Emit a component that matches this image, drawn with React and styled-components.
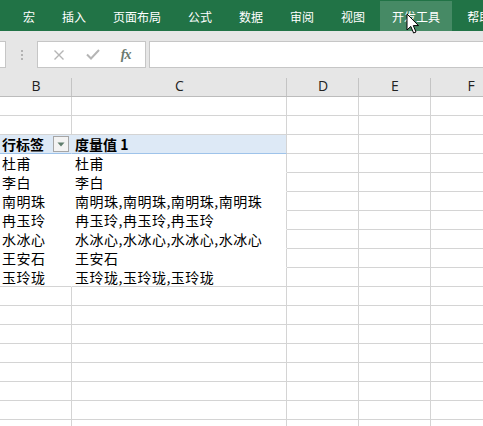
import React from "react";
import styled, { createGlobalStyle } from "styled-components";

const Global = createGlobalStyle`
  html, body { margin: 0; padding: 0; background: #fff; overflow: hidden; }
  body { width: 483px; height: 426px; font-family: "Noto Sans CJK SC", "Liberation Sans", sans-serif; }
`;

const Page = styled.div`
  position: relative;
  width: 483px;
  height: 426px;
  overflow: hidden;
  display: flex;
  flex-direction: column;
`;

const Ribbon = styled.div`
  height: 31px;
  flex: none;
  background: #217346;
  display: flex;
  align-items: stretch;
  padding-left: 11px;
  gap: 3px;
  white-space: nowrap;
`;

const Tab = styled.div`
  padding: 0 12px;
  display: flex;
  align-items: center;
  color: #fff;
  font-size: 12px;
  margin-top: 1px;
  background: ${(p) => (p.$hover ? "rgba(255,255,255,0.17)" : "transparent")};
`;

const FormulaBar = styled.div`
  height: 39px;
  flex: none;
  box-sizing: border-box;
  background: #e6e6e6;
  padding: 10px 0 2px 0;
  display: flex;
  align-items: stretch;
`;

const NameBox = styled.div`
  width: 6px;
  box-sizing: border-box;
  background: #fff;
  border: 1px solid #c6c6c6;
  border-left: none;
`;

const Grip = styled.div`
  width: 31px;
  display: flex;
  flex-direction: column;
  align-items: center;
  justify-content: center;
  gap: 2px;
`;

const Dot = styled.span`
  width: 2px;
  height: 2px;
  background: #b3b3b3;
`;

const FxBox = styled.div`
  width: 109px;
  box-sizing: border-box;
  background: #fff;
  border: 1px solid #c6c6c6;
  display: flex;
  align-items: center;
  justify-content: space-around;
  padding: 0 4px;
`;

const FxText = styled.span`
  font-family: "Liberation Serif", "DejaVu Serif", serif;
  font-style: italic;
  font-size: 14px;
  font-weight: bold;
  color: #6b7a70;
  letter-spacing: -1px;
`;

const FormulaInput = styled.div`
  flex: 1;
  margin-left: 3px;
  background: #fff;
  border: 1px solid #c6c6c6;
  border-right: none;
`;

const HeaderRow = styled.div`
  height: 27px;
  flex: none;
  box-sizing: border-box;
  background: #e6e6e6;
  border-bottom: 1px solid #bcbcbc;
  display: grid;
  grid-template-columns: 72px 215px 72px 72px 80px;
`;

const ColHead = styled.div`
  position: relative;
  display: flex;
  justify-content: center;
  align-items: flex-end;
  padding-bottom: 1px;
  font-family: "Open Sans", "Liberation Sans", sans-serif;
  font-size: 14px;
  color: #222;
  &::after {
    content: "";
    position: absolute;
    right: 0;
    top: 8px;
    bottom: 0;
    width: 1px;
    background: #c4c4c4;
  }
`;

const Sheet = styled.div`
  display: grid;
  grid-template-columns: 72px 215px 72px 72px 80px;
  grid-auto-rows: 19px;
`;

const Cell = styled.div`
  box-sizing: border-box;
  border-right: 1px solid ${(p) => (p.$noRight ? "transparent" : "#d4d4d4")};
  border-bottom: 1px solid
    ${(p) => (p.$pivotHead ? "#9ec3ea" : p.$noBottom ? "transparent" : "#d4d4d4")};
  background: ${(p) => (p.$pivotHead ? "#dde9f6" : "#fff")};
  font-size: 14px;
  line-height: 18px;
  letter-spacing: ${(p) => (p.$bold ? "0" : "0.5px")};
  color: #000;
  padding-left: ${(p) => (p.$first ? "2px" : "3px")};
  white-space: nowrap;
  font-weight: ${(p) => (p.$bold ? "bold" : "normal")};
  display: flex;
  align-items: center;
  gap: 9px;
  overflow: visible;
`;

const FilterBtn = styled.span`
  width: 16px;
  height: 16px;
  box-sizing: border-box;
  border: 1px solid #a6a6a6;
  background: #f3f3f3;
  display: flex;
  align-items: center;
  justify-content: center;
`;

const Cursor = styled.svg`
  position: absolute;
  left: 406px;
  top: 13px;
`;

const tabs = ["宏", "插入", "页面布局", "公式", "数据", "审阅", "视图", "开发工具", "帮助"];
const data = [
  ["杜甫", "杜甫"],
  ["李白", "李白"],
  ["南明珠", "南明珠,南明珠,南明珠,南明珠"],
  ["冉玉玲", "冉玉玲,冉玉玲,冉玉玲"],
  ["水冰心", "水冰心,水冰心,水冰心,水冰心"],
  ["王安石", "王安石"],
  ["玉玲珑", "玉玲珑,玉玲珑,玉玲珑"],
];

function EmptyRow() {
  return (
    <>
      <Cell />
      <Cell />
      <Cell />
      <Cell />
      <Cell />
    </>
  );
}

export default function App() {
  const rows = [];
  rows.push(<EmptyRow key="r1" />);
  rows.push(<EmptyRow key="r2" />);
  rows.push(
    <React.Fragment key="ph">
      <Cell $pivotHead $noRight $first $bold>
        行标签
        <FilterBtn>
          <svg width="8" height="5" viewBox="0 0 8 5">
            <path d="M0.5 0.5 L7.5 0.5 L4 4.5 Z" fill="#5f7d6c" />
          </svg>
        </FilterBtn>
      </Cell>
      <Cell $pivotHead $bold>度量值 1</Cell>
      <Cell />
      <Cell />
      <Cell />
    </React.Fragment>
  );
  data.forEach(([a, b], i) => {
    const last = i === data.length - 1;
    rows.push(
      <React.Fragment key={"d" + i}>
        <Cell $noRight $noBottom={!last} $first>{a}</Cell>
        <Cell $noBottom={!last}>{b}</Cell>
        <Cell />
        <Cell />
        <Cell />
      </React.Fragment>
    );
  });
  for (let i = 0; i < 8; i++) rows.push(<EmptyRow key={"e" + i} />);

  return (
    <Page>
      <Global />
      <Ribbon>
        {tabs.map((t) => (
          <Tab key={t} $hover={t === "开发工具"}>{t}</Tab>
        ))}
      </Ribbon>
      <FormulaBar>
        <NameBox />
        <Grip>
          <Dot />
          <Dot />
          <Dot />
        </Grip>
        <FxBox>
          <svg width="12" height="12" viewBox="0 0 12 12">
            <path d="M1.5 1.5 L10.5 10.5 M10.5 1.5 L1.5 10.5" stroke="#b5b5b5" strokeWidth="1.4" fill="none" />
          </svg>
          <svg width="14" height="11" viewBox="0 0 14 11">
            <path d="M1 5.5 L5 9.5 L13 1" stroke="#b5b5b5" strokeWidth="2" fill="none" />
          </svg>
          <FxText>fx</FxText>
        </FxBox>
        <FormulaInput />
      </FormulaBar>
      <HeaderRow>
        <ColHead>B</ColHead>
        <ColHead>C</ColHead>
        <ColHead>D</ColHead>
        <ColHead>E</ColHead>
        <ColHead>F</ColHead>
      </HeaderRow>
      <Sheet>{rows}</Sheet>
      <Cursor width="14" height="23" viewBox="0 0 14 23">
        <path
          d="M1 1 L1 17 L4.8 13.4 L7.6 20 L10 19 L7.3 12.6 L12.5 12.6 Z"
          fill="#fff"
          stroke="#000"
          strokeWidth="1"
          strokeLinejoin="miter"
        />
      </Cursor>
    </Page>
  );
}
